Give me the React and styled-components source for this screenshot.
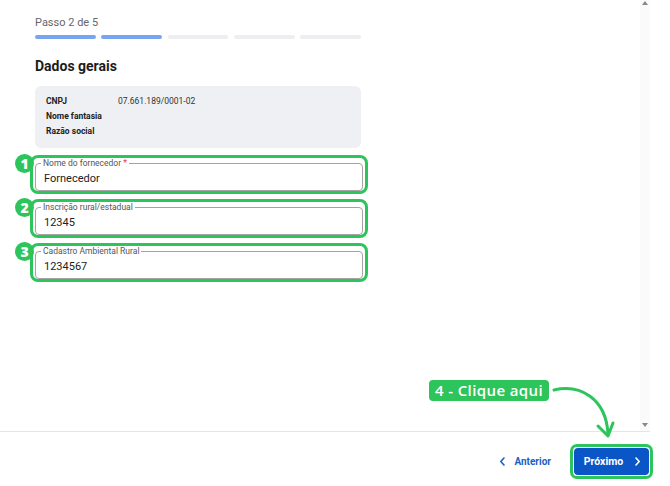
import React from 'react'
import styled, { createGlobalStyle } from 'styled-components'

const GlobalStyle = createGlobalStyle`
	body {
		margin: 0;
		background: #fff;
		font-family: Roboto, "Liberation Sans", sans-serif;
		color: #212121;
	}
`

const green = '#2dc55b'

const Page = styled.div`
	position: relative;
	width: 650px;
	height: 486px;
	display: flex;
	flex-direction: column;
`

const Main = styled.div`
	flex: 1;
	display: flex;
	min-height: 0;
`

const Content = styled.div`
	flex: 1;
	padding: 15px 0 0 35px;
`

const Column = styled.div`
	width: 326px;
`

const Scrollbar = styled.div`
	width: 10px;
	background: #fafafa;
	display: flex;
	flex-direction: column;
	justify-content: space-between;
	align-items: center;
	padding: 1px 0 4px;
`

const Arrow = styled.div`
	width: 0;
	height: 0;
	border-left: 3.5px solid transparent;
	border-right: 3.5px solid transparent;
	${({ down }) =>
		down ? 'border-top: 4px solid #888;' : 'border-bottom: 4px solid #888;'}
`

const StepText = styled.div`
	font-size: 11px;
	line-height: 16px;
	color: #666;
`

const Progress = styled.div`
	display: grid;
	grid-template-columns: repeat(5, 1fr);
	gap: 5.5px;
	margin-top: 4px;
`

const Segment = styled.div`
	height: 4px;
	border-radius: 2px;
	background: ${({ done }) => (done ? '#78a5ef' : '#eceef2')};
`

const Title = styled.h2`
	margin: 18px 0 0;
	font-size: 14px;
	line-height: 18px;
	font-weight: 700;
	color: #1c1c1c;
`

const InfoBox = styled.div`
	margin-top: 11px;
	background: #eff0f4;
	border-radius: 6px;
	padding: 8px 11px 9px;
`

const InfoRow = styled.div`
	display: grid;
	grid-template-columns: 72px 1fr;
	font-size: 8.5px;
	line-height: 15px;
`

const InfoLabel = styled.span`
	font-weight: 700;
	color: #222;
`

const InfoValue = styled.span`
	color: #333;
`

const Fields = styled.div`
	margin-top: 7px;
	display: flex;
	flex-direction: column;
	gap: 5px;
`

const Highlight = styled.div`
	position: relative;
	margin: 0 -7px 0 -5px;
	border: 3px solid ${green};
	border-radius: 8px;
	padding: 0 2px 0 2px;
`

const Badge = styled.div`
	position: absolute;
	left: -18px;
	top: -4px;
	width: 19px;
	height: 19px;
	border-radius: 50%;
	background: ${green};
	color: #fff;
	font-family: "Open Sans", sans-serif;
	font-weight: 800;
	font-size: 14px;
	line-height: 19px;
	text-align: center;
`

const Field = styled.fieldset`
	margin: 0;
	padding: 0 9px 2px 8px;
	border: 1px solid #a3a3a3;
	border-radius: 4px;
	min-width: 0;
`

const Legend = styled.legend`
	padding: 0 2px;
	margin-left: -3px;
	font-size: 8.5px;
	line-height: 10px;
	color: #555;
`

const Required = styled.span`
	color: #e53935;
`

const Value = styled.div`
	font-size: 11px;
	line-height: 18px;
	padding-top: 2px;
	height: 18px;
	color: #222;
`

const Footer = styled.div`
	height: 55px;
	border-top: 1px solid #e6e6e6;
	display: flex;
	justify-content: flex-end;
	align-items: center;
	gap: 19px;
	padding: 4px 1px 0 0;
	box-sizing: border-box;
`

const BackLink = styled.a`
	display: flex;
	align-items: center;
	gap: 8px;
	color: #1b5fc2;
	font-size: 10px;
	font-weight: 700;
	text-decoration: none;
`

const ButtonRing = styled.div`
	border: 3px solid ${green};
	border-radius: 7px;
	padding: 1px;
	margin-right: -4px;
`

const PrimaryButton = styled.button`
	width: 75px;
	height: 27px;
	border: none;
	border-radius: 4px;
	background: #0a56c6;
	color: #fff;
	font-family: Roboto, sans-serif;
	font-size: 10.5px;
	font-weight: 700;
	display: flex;
	align-items: center;
	justify-content: center;
	gap: 11px;
	padding: 0 0 0 2px;
`

const Callout = styled.div`
	position: absolute;
	left: 429px;
	top: 380px;
	width: 120px;
	height: 21px;
	border-radius: 4px;
	background: ${green};
	color: #fff;
	font-family: "Open Sans", sans-serif;
	font-weight: 600;
	font-size: 15px;
	letter-spacing: 0.4px;
	line-height: 21px;
	text-align: center;
`

const CalloutArrow = styled.svg`
	position: absolute;
	left: 550px;
	top: 384px;
	overflow: visible;
`

function Chevron({ left, color }) {
	return (
		<svg width="7" height="9" viewBox="0 0 7 9">
			<path
				d={left ? 'M5 1 L1.8 4.5 L5 8' : 'M2 1 L5.2 4.5 L2 8'}
				fill="none"
				stroke={color}
				strokeWidth="1.6"
				strokeLinecap="round"
				strokeLinejoin="round"
			/>
		</svg>
	)
}

const fields = [
	{ label: 'Nome do fornecedor', value: 'Fornecedor', required: true },
	{ label: 'Inscrição rural/estadual', value: '12345' },
	{ label: 'Cadastro Ambiental Rural', value: '1234567' },
]

const info = [
	['CNPJ', '07.661.189/0001-02'],
	['Nome fantasia', ''],
	['Razão social', ''],
]

export default function App() {
	return (
		<Page>
			<GlobalStyle />
			<Main>
				<Content>
					<Column>
						<StepText>Passo 2 de 5</StepText>
						<Progress>
							{[0, 1, 2, 3, 4].map(i => (
								<Segment key={i} done={i < 2} />
							))}
						</Progress>
						<Title>Dados gerais</Title>
						<InfoBox>
							{info.map(([label, value]) => (
								<InfoRow key={label}>
									<InfoLabel>{label}</InfoLabel>
									<InfoValue>{value}</InfoValue>
								</InfoRow>
							))}
						</InfoBox>
						<Fields>
							{fields.map((f, i) => (
								<Highlight key={f.label}>
									<Badge>{i + 1}</Badge>
									<Field>
										<Legend>
											{f.label}
											{f.required && <Required> *</Required>}
										</Legend>
										<Value>{f.value}</Value>
									</Field>
								</Highlight>
							))}
						</Fields>
					</Column>
				</Content>
				<Scrollbar>
					<Arrow />
					<Arrow down />
				</Scrollbar>
			</Main>
			<Footer>
				<BackLink href="#">
					<Chevron left color="#1b5fc2" />
					Anterior
				</BackLink>
				<ButtonRing>
					<PrimaryButton>
						Próximo
						<Chevron color="#fff" />
					</PrimaryButton>
				</ButtonRing>
			</Footer>
			<Callout>4 - Clique aqui</Callout>
			<CalloutArrow width="70" height="60">
				<path
					d="M4 6 C 30 0, 56 14, 58 50"
					fill="none"
					stroke={green}
					strokeWidth="3"
					strokeLinecap="round"
				/>
				<path
					d="M48 42 L58 52 L63 39"
					fill="none"
					stroke={green}
					strokeWidth="3"
					strokeLinecap="round"
					strokeLinejoin="round"
				/>
			</CalloutArrow>
		</Page>
	)
}
